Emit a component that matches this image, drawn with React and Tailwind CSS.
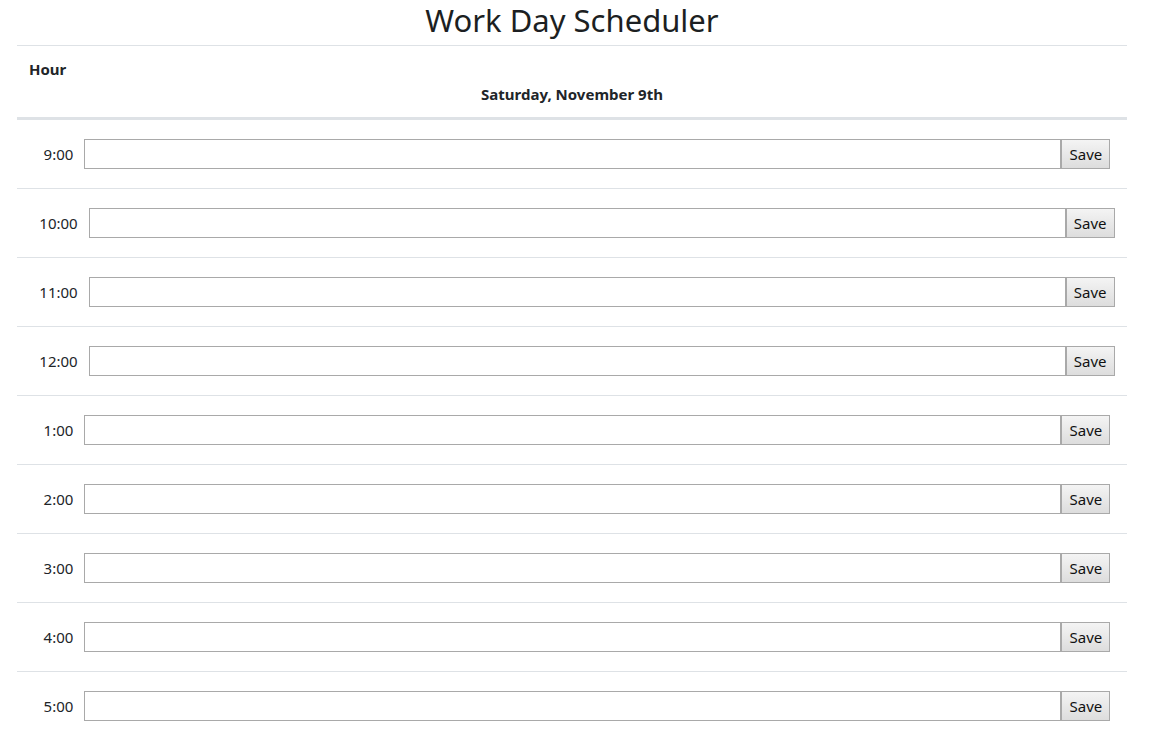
import React from "react";

const hours = ["9:00", "10:00", "11:00", "12:00", "1:00", "2:00", "3:00", "4:00", "5:00"];

function Row({ hour }) {
  return (
    <div className="flex items-center justify-center h-[69px] border-t border-[#dee2e6] pl-[22px] pr-3">
      <span className="text-[15px] text-[#212529]">{hour}</span>
      <input
        type="text"
        className="ml-[11px] w-[977px] h-[30px] border border-[#a9a9a9] bg-white outline-none"
      />
      <button className="w-[49px] h-[30px] border border-[#a9a9a9] bg-gradient-to-b from-[#f4f4f4] to-[#dddddd] text-[15px] text-[#111] leading-none">
        Save
      </button>
    </div>
  );
}

export default function App() {
  return (
    <div className="min-h-screen bg-white text-[#212529]" style={{ fontFamily: '"Noto Sans", "Open Sans", sans-serif' }}>
      <div className="w-[1110px] ml-[17px]">
        <h1 className="h-[45px] text-center text-[31px] leading-[40px] font-normal text-[#1c1f22]">Work Day Scheduler</h1>
        <div className="border-t border-[#dee2e6] border-b-2 h-[74px] px-3 pt-[11px]">
          <div className="text-[15px] font-bold leading-[24px]">Hour</div>
          <div className="text-center text-[15px] font-bold leading-[24px] mt-[1px]">Saturday, November 9th</div>
        </div>
        {hours.map((h) => (
          <Row key={h} hour={h} />
        ))}
      </div>
    </div>
  );
}
